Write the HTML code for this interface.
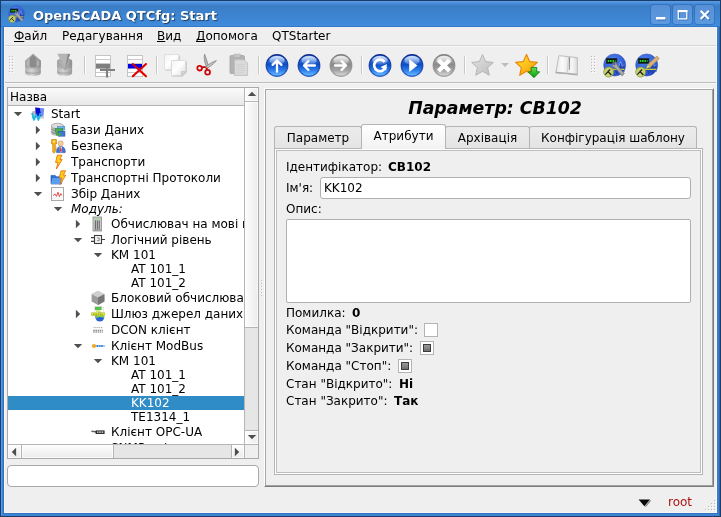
<!DOCTYPE html>
<html lang="uk">
<head>
<meta charset="utf-8">
<title>OpenSCADA QTCfg: Start</title>
<style>
html,body{margin:0;padding:0;}
body{width:721px;height:517px;overflow:hidden;background:#000;font-family:"DejaVu Sans","Liberation Sans",sans-serif;font-size:12px;color:#000;}
#win{will-change:transform;position:absolute;left:0;top:0;width:721px;height:517px;background:#1b3d6b;overflow:hidden;}
.ring{border:1px solid;}
#win *{box-sizing:border-box;}
.abs{position:absolute;}
#titlebar{left:1px;top:0;width:719px;height:27px;background:linear-gradient(#1b3d6b 0px,#1b3d6b 1px,#5b9ce4 1px,#5596e0 2px,#4487d3 4px,#3a7dc6 6px,#408bdc 26px,#3277c8 26px,#3277c8 27px);}
#title{left:32px;top:8px;font-weight:bold;font-size:13px;color:#fff;white-space:nowrap;text-shadow:1px 1px 1px rgba(0,0,0,.55);line-height:16px;}
.wbtn{top:5px;width:19px;height:19px;border-radius:3px;background:linear-gradient(#5790d6,#5c9ae0);box-shadow:0 0 0 1px rgba(40,95,170,.45);}
#client{left:4px;top:27px;width:713px;height:486px;background:#efefef;border:1px solid #f9f6f0;border-top:none;}
#menuline{left:5px;top:45px;width:711px;height:2px;background:linear-gradient(#d6d6d6 0,#d6d6d6 1px,#f9f9f9 1px,#f9f9f9 2px);}
.mi{top:29px;line-height:15px;white-space:nowrap;}
.mi u{text-decoration:underline;text-underline-offset:1px;text-decoration-skip-ink:none;}
#tbline{left:5px;top:82px;width:711px;height:2px;background:linear-gradient(#bcbcbc 0,#bcbcbc 1px,#f7f7f7 1px,#f7f7f7 2px);}
.sep{top:56px;width:1px;height:18px;background:#c4c4c4;}
/* tree */
#tree{left:7px;top:87px;width:252px;height:372px;border:1px solid #a9a9a9;background:#fff;}
#thead{left:0;top:0;width:236px;height:18px;background:linear-gradient(#fbfbfb,#e8e8e8);border-bottom:1px solid #b5b5b5;padding-left:2px;line-height:19px;}
#rows{left:0;top:0;width:236px;height:356px;overflow:hidden;}
.row{left:0;width:236px;white-space:nowrap;overflow:hidden;}
.row span{position:absolute;top:0;}
.sel{background:#308cc6;color:#fff;}
#vsb{left:236px;top:0;width:14px;height:356px;border-left:1px solid #b5b5b5;background:#e6e6e6;}
#hsb{left:0;top:356px;width:236px;height:14px;border-top:1px solid #b5b5b5;background:#e6e6e6;}
.vb{left:0;width:13px;background:linear-gradient(90deg,#fefefe,#ebebeb);box-shadow:inset 0 0 0 1px rgba(255,255,255,.7);}
.hb{top:0;height:13px;background:linear-gradient(#fefefe,#ebebeb);box-shadow:inset 0 0 0 1px rgba(255,255,255,.7);}
#corner{left:236px;top:356px;width:14px;height:14px;background:#efefef;border-left:1px solid #b5b5b5;border-top:1px solid #b5b5b5;}
#ledit{left:7px;top:465px;width:252px;height:22px;border:1px solid #a9a9a9;border-radius:4px;background:#fff;}
/* right */
#rframe{left:264px;top:88px;width:450px;height:399px;border:1px solid;border-color:#fff #7c7c7c #7c7c7c #fff;}
#rframe2{left:265px;top:89px;width:448px;height:397px;border:1px solid;border-color:#a8a8a8 #a2a2a2 #a2a2a2 #a8a8a8;}
#ptitle{left:272px;top:97px;width:446px;text-align:center;font-weight:bold;font-style:italic;font-size:17.33px;line-height:22px;white-space:nowrap;}
.tab{top:126px;height:22px;border:1px solid #b4b4b4;border-bottom:none;border-radius:3px 3px 0 0;background:linear-gradient(#ececec,#e4e4e4);text-align:center;line-height:22px;white-space:nowrap;}
.tab.on{top:124px;height:25px;background:linear-gradient(#ffffff,#f2f2f2);line-height:23px;z-index:3;}
#pane{left:274px;top:148px;width:429px;height:327px;border:1px solid #b4b4b4;}
#pane2{left:275px;top:149px;width:427px;height:325px;border:1px solid #fff;}
#inner{left:276px;top:150px;width:425px;height:323px;border:1px solid #bdbdbd;}
.lbl{white-space:nowrap;line-height:15px;}
.b{font-weight:bold;}
.inp{border:1px solid #b0b0b0;border-radius:3px;background:#fff;}
.cb{width:14px;height:14px;border:1px solid #b4b4b4;background:#fff;}
.cb i{position:absolute;left:2px;top:2px;width:8px;height:8px;background:linear-gradient(#9a9a9a,#6e6e6e);border:1px solid #3c3c3c;}
</style>
</head>
<body>
<div id="win">
 <div class="abs ring" style="left:1px;top:1px;width:719px;height:515px;border-color:#5b9ce4 #2c66b0 #3d80cc #5a9ae2"></div>
 <div class="abs ring" style="left:2px;top:2px;width:717px;height:513px;border-color:#5596e0 #3a7dc8 #3f88d8 #3f86d6"></div>
 <div class="abs ring" style="left:3px;top:3px;width:715px;height:511px;border-color:#4487d3 #3a7dc8 #2f74c4 #2f74c4"></div>
 <div id="titlebar" class="abs">
  <svg class="abs" style="left:5.65px;top:5.27px" width="19.64" height="18.9" viewBox="0 0 27 26"><defs><radialGradient id="oga" cx=".4" cy=".3" r=".8"><stop offset="0" stop-color="#4f83f2"/><stop offset="1" stop-color="#1f48c6"/></radialGradient></defs>
<circle cx="13" cy="12" r="11" fill="url(#oga)" stroke="#3a5bb8" stroke-width=".6"/>
<path d="M12 15 L15 10.6 L16.6 14.6 L19 8.6 L20.6 13.4 L22.4 11.6 L23 19 L20.8 17.6 L19 21.6 L17 18.4 L15 21.4 Z" fill="#1d3ca6" opacity=".75"/><path d="M15 10.6 L16.6 14.6 L19 8.6 L20.6 13.4 L22.4 11.6" fill="none" stroke="#a9c0f6" stroke-width=".7" opacity=".8"/>
<rect x="4.6" y="5.4" width="10.6" height="5" fill="#0c1a0c" stroke="#222" stroke-width=".5"/><path d="M6 7.9 H13.8" stroke="#25d325" stroke-width="2" stroke-dasharray="1.6 .8"/>
<path d="M9 16.3 H22.6" stroke="#e9e420" stroke-width="1.1"/>
<circle cx="7" cy="19" r="5" fill="#cdd66a" fill-opacity=".92" stroke="#7d8a2c" stroke-width=".7"/><path d="M3.6 21.6 L8.4 16.4 M6.4 18.6 L9.6 22" stroke="#111" stroke-width="1.1"/>
<path d="M11.2 9.6 L14.6 9 L15.4 12 L22.6 20.6 L20.4 22.8 L13 14.8 L10.4 13.4 Z" fill="#a9a9a9" stroke="#636363" stroke-width=".7"/><circle cx="12.6" cy="11" r="1.2" fill="#3a5fc9"/></svg>
  <div id="title" class="abs">OpenSCADA QTCfg: Start</div>
  <div class="abs wbtn" style="left:650px"><svg class="abs" style="left:0;top:0" width="19" height="19" viewBox="0 0 19 19"><rect x="6" y="13" width="9" height="2.5" fill="#1f4f94" opacity=".6"/><rect x="5" y="12" width="9.4" height="2.5" fill="#fff"/></svg></div>
  <div class="abs wbtn" style="left:672px"><svg class="abs" style="left:0;top:0" width="19" height="19" viewBox="0 0 19 19"><path d="M6.3 7 H14.8 V14.9 H6.3 Z" fill="none" stroke="#1f4f94" stroke-opacity=".55" stroke-width="1"/><path d="M5.3 6 H13.8 V13.9 H5.3 Z" fill="none" stroke="#fff" stroke-width="1.2"/><rect x="4.7" y="5" width="9.7" height="2.2" fill="#fff"/></svg></div>
  <div class="abs wbtn" style="left:694px"><svg class="abs" style="left:0;top:0" width="19" height="19" viewBox="0 0 19 19"><path d="M6.6 6.8 L14.8 15 M14.8 6.8 L6.6 15" stroke="#1f4f94" stroke-opacity=".55" stroke-width="2"/><path d="M5.6 5.8 L13.8 14 M13.8 5.8 L5.6 14" stroke="#fff" stroke-width="2.1"/></svg></div>
 </div>
 <div id="client" class="abs"></div>
 <!-- menu bar -->
 <div class="abs mi" style="left:14px"><u>Ф</u>айл</div>
 <div class="abs mi" style="left:62px">Редагування</div>
 <div class="abs mi" style="left:157px"><u>В</u>ид</div>
 <div class="abs mi" style="left:196px"><u>Д</u>опомога</div>
 <div class="abs mi" style="left:272px">QTStarter</div>
 <div id="menuline" class="abs"></div>
 <!-- toolbar -->
 <svg class="abs" style="left:9px;top:56px" width="5" height="17" viewBox="0 0 5 17"><rect x="0" y="0" width="1" height="1" fill="#b9b9b9"/><rect x="1" y="1" width="1" height="1" fill="#fff"/><rect x="3" y="0" width="1" height="1" fill="#b9b9b9"/><rect x="4" y="1" width="1" height="1" fill="#fff"/><rect x="0" y="3" width="1" height="1" fill="#b9b9b9"/><rect x="1" y="4" width="1" height="1" fill="#fff"/><rect x="3" y="3" width="1" height="1" fill="#b9b9b9"/><rect x="4" y="4" width="1" height="1" fill="#fff"/><rect x="0" y="6" width="1" height="1" fill="#b9b9b9"/><rect x="1" y="7" width="1" height="1" fill="#fff"/><rect x="3" y="6" width="1" height="1" fill="#b9b9b9"/><rect x="4" y="7" width="1" height="1" fill="#fff"/><rect x="0" y="9" width="1" height="1" fill="#b9b9b9"/><rect x="1" y="10" width="1" height="1" fill="#fff"/><rect x="3" y="9" width="1" height="1" fill="#b9b9b9"/><rect x="4" y="10" width="1" height="1" fill="#fff"/><rect x="0" y="12" width="1" height="1" fill="#b9b9b9"/><rect x="1" y="13" width="1" height="1" fill="#fff"/><rect x="3" y="12" width="1" height="1" fill="#b9b9b9"/><rect x="4" y="13" width="1" height="1" fill="#fff"/><rect x="0" y="15" width="1" height="1" fill="#b9b9b9"/><rect x="1" y="16" width="1" height="1" fill="#fff"/><rect x="3" y="15" width="1" height="1" fill="#b9b9b9"/><rect x="4" y="16" width="1" height="1" fill="#fff"/></svg>
 <svg class="abs" style="left:591px;top:56px" width="5" height="17" viewBox="0 0 5 17"><rect x="0" y="0" width="1" height="1" fill="#b9b9b9"/><rect x="1" y="1" width="1" height="1" fill="#fff"/><rect x="3" y="0" width="1" height="1" fill="#b9b9b9"/><rect x="4" y="1" width="1" height="1" fill="#fff"/><rect x="0" y="3" width="1" height="1" fill="#b9b9b9"/><rect x="1" y="4" width="1" height="1" fill="#fff"/><rect x="3" y="3" width="1" height="1" fill="#b9b9b9"/><rect x="4" y="4" width="1" height="1" fill="#fff"/><rect x="0" y="6" width="1" height="1" fill="#b9b9b9"/><rect x="1" y="7" width="1" height="1" fill="#fff"/><rect x="3" y="6" width="1" height="1" fill="#b9b9b9"/><rect x="4" y="7" width="1" height="1" fill="#fff"/><rect x="0" y="9" width="1" height="1" fill="#b9b9b9"/><rect x="1" y="10" width="1" height="1" fill="#fff"/><rect x="3" y="9" width="1" height="1" fill="#b9b9b9"/><rect x="4" y="10" width="1" height="1" fill="#fff"/><rect x="0" y="12" width="1" height="1" fill="#b9b9b9"/><rect x="1" y="13" width="1" height="1" fill="#fff"/><rect x="3" y="12" width="1" height="1" fill="#b9b9b9"/><rect x="4" y="13" width="1" height="1" fill="#fff"/><rect x="0" y="15" width="1" height="1" fill="#b9b9b9"/><rect x="1" y="16" width="1" height="1" fill="#fff"/><rect x="3" y="15" width="1" height="1" fill="#b9b9b9"/><rect x="4" y="16" width="1" height="1" fill="#fff"/></svg>
 <svg class="abs" style="left:84px;top:56px" width="2" height="18" viewBox="0 0 2 18"><rect x="0" y="0" width="1" height="18" fill="#c9c9c9"/><rect x="1" y="0" width="1" height="18" fill="#fcfcfc"/></svg>
 <svg class="abs" style="left:156px;top:56px" width="2" height="18" viewBox="0 0 2 18"><rect x="0" y="0" width="1" height="18" fill="#c9c9c9"/><rect x="1" y="0" width="1" height="18" fill="#fcfcfc"/></svg>
 <svg class="abs" style="left:258px;top:56px" width="2" height="18" viewBox="0 0 2 18"><rect x="0" y="0" width="1" height="18" fill="#c9c9c9"/><rect x="1" y="0" width="1" height="18" fill="#fcfcfc"/></svg>
 <svg class="abs" style="left:361px;top:56px" width="2" height="18" viewBox="0 0 2 18"><rect x="0" y="0" width="1" height="18" fill="#c9c9c9"/><rect x="1" y="0" width="1" height="18" fill="#fcfcfc"/></svg>
 <svg class="abs" style="left:464px;top:56px" width="2" height="18" viewBox="0 0 2 18"><rect x="0" y="0" width="1" height="18" fill="#c9c9c9"/><rect x="1" y="0" width="1" height="18" fill="#fcfcfc"/></svg>
 <svg class="abs" style="left:547px;top:56px" width="2" height="18" viewBox="0 0 2 18"><rect x="0" y="0" width="1" height="18" fill="#c9c9c9"/><rect x="1" y="0" width="1" height="18" fill="#fcfcfc"/></svg>
 <svg class="abs" style="left:25px;top:53px" width="17" height="24" viewBox="0 0 17 24"><defs><linearGradient id="dla" x1="0" x2="1" y1="0" y2="0"><stop offset="0" stop-color="#b2b2b2"/><stop offset=".4" stop-color="#d2d2d2"/><stop offset="1" stop-color="#9d9d9d"/></linearGradient>
<linearGradient id="dlb" x1="0" x2="1" y1="0" y2="0"><stop offset="0" stop-color="#a2a2a2"/><stop offset=".45" stop-color="#bcbcbc"/><stop offset="1" stop-color="#8f8f8f"/></linearGradient></defs><path d="M8 .6 L15.8 7.8 V20.2 C15.8 23.6 .2 23.6 .2 20.2 V7.8 Z" fill="url(#dla)"/>
<path d="M8 .6 L15.8 7.8 V13.6 C15.8 16.6 .2 16.6 .2 13.6 V7.8 Z" fill="url(#dlb)"/>
<path d="M.2 17.2 C.2 20.4 15.8 20.4 15.8 17.2 V18.4 C15.8 21.6 .2 21.6 .2 18.4 Z" fill="#9e9e9e" opacity=".75"/>
<path d="M8 1.6 L11.3 5 V13.2 C11.3 15 4.7 15 4.7 13.2 V5 Z" fill="#8b8b8b"/>
<path d="M3 8 V12.6 M13 8 V12.6" stroke="#c2c2c2" stroke-width="1.4" opacity=".7"/></svg>
 <svg class="abs" style="left:57px;top:53px" width="17" height="24" viewBox="0 0 17 24"><defs><linearGradient id="dsa" x1="0" x2="1" y1="0" y2="0"><stop offset="0" stop-color="#b2b2b2"/><stop offset=".4" stop-color="#d2d2d2"/><stop offset="1" stop-color="#9d9d9d"/></linearGradient>
<linearGradient id="dsb" x1="0" x2="1" y1="0" y2="0"><stop offset="0" stop-color="#a2a2a2"/><stop offset=".45" stop-color="#bcbcbc"/><stop offset="1" stop-color="#8f8f8f"/></linearGradient></defs><path d="M.1 8 V20.2 C.1 23.6 15.1 23.6 15.1 20.2 V8 C15.1 4.6 .1 4.6 .1 8 Z" fill="url(#dsa)"/>
<path d="M.1 8 V13.4 C.1 16.6 15.1 16.6 15.1 13.4 V8 C15.1 4.6 .1 4.6 .1 8 Z" fill="url(#dsb)"/>
<path d="M.1 17.2 C.1 20.4 15.1 20.4 15.1 17.2 V18.4 C15.1 21.6 .1 21.6 .1 18.4 Z" fill="#9e9e9e" opacity=".75"/>
<path d="M.9 1 H13 L8 15.8 Z" fill="#b6b6b6" stroke="#a0a0a0" stroke-width=".4"/><path d="M10.8 1 H13 L8 15.8 Z" fill="#868686"/>
<path d="M2.4 10.5 L8 17 L13.4 9.4" fill="none" stroke="#8f8f8f" stroke-width="1" opacity=".6"/></svg>
 <svg class="abs" style="left:95px;top:55px" width="22" height="23" viewBox="0 0 22 23"><rect x=".5" y=".5" width="15" height="21" fill="#fff" stroke="#c4c4c4"/>
<path d="M1 4.5 H15 M1 8.5 H15 M1 13.5 H15 M1 17.5 H15" stroke="#c9c9c9" stroke-width="1"/><rect x="1" y="9" width="14" height="4.4" fill="#7f7f7f"/><path d="M5 15 H20 M12 9.5 V22.5" stroke="#808080" stroke-width="2.2"/></svg>
 <svg class="abs" style="left:127px;top:55px" width="22" height="23" viewBox="0 0 22 23"><rect x=".5" y=".5" width="15" height="21" fill="#fff" stroke="#c4c4c4"/>
<path d="M1 4.5 H15 M1 8.5 H15 M1 13.5 H15 M1 17.5 H15" stroke="#c9c9c9" stroke-width="1"/><rect x="1" y="9" width="14" height="4.4" fill="#0000e6"/><path d="M5.8 9 L19 21.2 M19 9 L5.8 21.2" stroke="#e40000" stroke-width="2.1" stroke-linecap="round"/></svg>
 <svg class="abs" style="left:163px;top:53px" width="24" height="24" viewBox="0 0 24 24"><defs><linearGradient id="cpg" x1="0" x2="1" y1="0" y2="1"><stop offset="0" stop-color="#f2f2f2"/><stop offset=".45" stop-color="#ffffff"/><stop offset="1" stop-color="#dedede"/></linearGradient></defs>
<path d="M2.4 17 H12 L16.4 12.8 V2.4" fill="none" stroke="#c9c9c9" stroke-width="1.6" opacity=".8"/>
<path d="M1.5 1.5 H15.5 V12.5 L11.5 16.5 H1.5 Z" fill="url(#cpg)" stroke="#dcdcdc" stroke-width=".8"/>
<path d="M15.5 12.5 H11.5 V16.5 Z" fill="#d9d9d9" stroke="#c6c6c6" stroke-width=".7"/>
<path d="M9.4 23 H19 L23.4 18.8 V8.4" fill="none" stroke="#c4c4c4" stroke-width="1.6" opacity=".8"/>
<path d="M8.5 7.5 H22.5 V18.5 L18.5 22.5 H8.5 Z" fill="url(#cpg)" stroke="#d6d6d6" stroke-width=".8"/>
<path d="M22.5 18.5 H18.5 V22.5 Z" fill="#d6d6d6" stroke="#c2c2c2" stroke-width=".7"/></svg>
 <svg class="abs" style="left:195px;top:53px" width="24" height="24" viewBox="0 0 24 24"><path d="M9.6 1.2 C8.6 5 9.6 10.5 12.2 15 L13.6 13.6 C12.2 9.5 11.4 5 9.6 1.2 Z" fill="#b8b8b8" stroke="#7c7c7c" stroke-width=".7"/>
<path d="M21.4 7.6 C18 8.6 13.4 11.2 10 14.6 L11.6 16 C15 13.2 19 11 21.4 7.6 Z" fill="#c4c4c4" stroke="#7c7c7c" stroke-width=".7"/>
<circle cx="4.6" cy="15.2" r="2.3" fill="none" stroke="#cc0a0a" stroke-width="1.8"/>
<circle cx="12.6" cy="19.2" r="2.4" fill="none" stroke="#cc0a0a" stroke-width="1.8"/>
<path d="M6.6 14.4 L10.6 13.8 M12 16.8 L11.6 14.6" stroke="#cc0a0a" stroke-width="1.8"/></svg>
 <svg class="abs" style="left:228px;top:53px" width="22" height="24" viewBox="0 0 22 24"><rect x="2" y="2.6" width="14.4" height="18" rx="1.2" fill="#b3b3b3" stroke="#a2a2a2" stroke-width=".8"/>
<rect x="5.6" y="1.2" width="7.2" height="3.4" rx="1" fill="#c6c6c6" stroke="#a4a4a4" stroke-width=".6"/>
<path d="M6.5 6.8 H16 L19.6 10 V22.4 H6.5 Z" fill="#dadada" stroke="#bdbdbd" stroke-width=".8"/>
<path d="M8.5 11.5 H17 M8.5 13.5 H17 M8.5 15.5 H17 M8.5 17.5 H17 M8.5 19.5 H15" stroke="#cdcdcd" stroke-width=".7"/></svg>
 <svg class="abs" style="left:265px;top:53px" width="24" height="24" viewBox="0 -0.5 24 24"><defs><linearGradient id="buf" x1="0" x2="0" y1="0" y2="1"><stop offset="0" stop-color="#4f93f0"/><stop offset=".45" stop-color="#0c4cc4"/><stop offset=".75" stop-color="#2f82ec"/><stop offset="1" stop-color="#6abaff"/></linearGradient>
<linearGradient id="bub" x1="0" x2="0" y1="0" y2="1"><stop offset="0" stop-color="#0d2688"/><stop offset="1" stop-color="#2f66cc"/></linearGradient>
<linearGradient id="bug" x1="0" x2="0" y1="0" y2="1"><stop offset="0" stop-color="#fff" stop-opacity=".78"/><stop offset="1" stop-color="#fff" stop-opacity=".1"/></linearGradient></defs>
<circle cx="12" cy="12" r="11.4" fill="url(#bub)"/><circle cx="12" cy="12" r="10.1" fill="url(#buf)"/>
<ellipse cx="12" cy="7" rx="7.6" ry="4.6" fill="url(#bug)"/><path d="M12 18.2 V7.4 M7.6 11.4 L12 7 L16.4 11.4" fill="none" stroke="#fff" stroke-width="2.3" stroke-linecap="round" stroke-linejoin="round"/></svg>
 <svg class="abs" style="left:297px;top:53px" width="24" height="24" viewBox="0 -0.5 24 24"><defs><linearGradient id="blf" x1="0" x2="0" y1="0" y2="1"><stop offset="0" stop-color="#4f93f0"/><stop offset=".45" stop-color="#0c4cc4"/><stop offset=".75" stop-color="#2f82ec"/><stop offset="1" stop-color="#6abaff"/></linearGradient>
<linearGradient id="blb" x1="0" x2="0" y1="0" y2="1"><stop offset="0" stop-color="#0d2688"/><stop offset="1" stop-color="#2f66cc"/></linearGradient>
<linearGradient id="blg" x1="0" x2="0" y1="0" y2="1"><stop offset="0" stop-color="#fff" stop-opacity=".78"/><stop offset="1" stop-color="#fff" stop-opacity=".1"/></linearGradient></defs>
<circle cx="12" cy="12" r="11.4" fill="url(#blb)"/><circle cx="12" cy="12" r="10.1" fill="url(#blf)"/>
<ellipse cx="12" cy="7" rx="7.6" ry="4.6" fill="url(#blg)"/><path d="M18 12 H7.4 M11.4 7.6 L7 12 L11.4 16.4" fill="none" stroke="#fff" stroke-width="2.3" stroke-linecap="round" stroke-linejoin="round"/></svg>
 <svg class="abs" style="left:329px;top:53px" width="24" height="24" viewBox="0 -0.5 24 24"><defs><linearGradient id="brf" x1="0" x2="0" y1="0" y2="1"><stop offset="0" stop-color="#c6c6c6"/><stop offset=".45" stop-color="#8a8a8a"/><stop offset=".75" stop-color="#a6a6a6"/><stop offset="1" stop-color="#d8d8d8"/></linearGradient>
<linearGradient id="brb" x1="0" x2="0" y1="0" y2="1"><stop offset="0" stop-color="#7e7e7e"/><stop offset="1" stop-color="#a4a4a4"/></linearGradient>
<linearGradient id="brg" x1="0" x2="0" y1="0" y2="1"><stop offset="0" stop-color="#fff" stop-opacity=".78"/><stop offset="1" stop-color="#fff" stop-opacity=".1"/></linearGradient></defs>
<circle cx="12" cy="12" r="11.4" fill="url(#brb)"/><circle cx="12" cy="12" r="10.1" fill="url(#brf)"/>
<ellipse cx="12" cy="7" rx="7.6" ry="4.6" fill="url(#brg)"/><path d="M6 12 H16.6 M12.6 7.6 L17 12 L12.6 16.4" fill="none" stroke="#fff" stroke-width="2.3" stroke-linecap="round" stroke-linejoin="round"/></svg>
 <svg class="abs" style="left:368px;top:53px" width="24" height="24" viewBox="0 -0.5 24 24"><defs><linearGradient id="bref" x1="0" x2="0" y1="0" y2="1"><stop offset="0" stop-color="#4f93f0"/><stop offset=".45" stop-color="#0c4cc4"/><stop offset=".75" stop-color="#2f82ec"/><stop offset="1" stop-color="#6abaff"/></linearGradient>
<linearGradient id="breb" x1="0" x2="0" y1="0" y2="1"><stop offset="0" stop-color="#0d2688"/><stop offset="1" stop-color="#2f66cc"/></linearGradient>
<linearGradient id="breg" x1="0" x2="0" y1="0" y2="1"><stop offset="0" stop-color="#fff" stop-opacity=".78"/><stop offset="1" stop-color="#fff" stop-opacity=".1"/></linearGradient></defs>
<circle cx="12" cy="12" r="11.4" fill="url(#breb)"/><circle cx="12" cy="12" r="10.1" fill="url(#bref)"/>
<ellipse cx="12" cy="7" rx="7.6" ry="4.6" fill="url(#breg)"/><path d="M16.6 8.4 A5.8 5.8 0 1 0 17.6 13.4" fill="none" stroke="#fff" stroke-width="2.7"/><path d="M18.9 10.6 L18.2 17 L12.6 13.6 Z" fill="#fff"/></svg>
 <svg class="abs" style="left:400px;top:53px" width="24" height="24" viewBox="0 -0.5 24 24"><defs><linearGradient id="bpf" x1="0" x2="0" y1="0" y2="1"><stop offset="0" stop-color="#4f93f0"/><stop offset=".45" stop-color="#0c4cc4"/><stop offset=".75" stop-color="#2f82ec"/><stop offset="1" stop-color="#6abaff"/></linearGradient>
<linearGradient id="bpb" x1="0" x2="0" y1="0" y2="1"><stop offset="0" stop-color="#0d2688"/><stop offset="1" stop-color="#2f66cc"/></linearGradient>
<linearGradient id="bpg" x1="0" x2="0" y1="0" y2="1"><stop offset="0" stop-color="#fff" stop-opacity=".78"/><stop offset="1" stop-color="#fff" stop-opacity=".1"/></linearGradient></defs>
<circle cx="12" cy="12" r="11.4" fill="url(#bpb)"/><circle cx="12" cy="12" r="10.1" fill="url(#bpf)"/>
<ellipse cx="12" cy="7" rx="7.6" ry="4.6" fill="url(#bpg)"/><path d="M9.2 5.6 L17.4 12 L9.2 18.4 Z" fill="#fff"/></svg>
 <svg class="abs" style="left:432px;top:53px" width="24" height="24" viewBox="0 -0.5 24 24"><defs><linearGradient id="bsf" x1="0" x2="0" y1="0" y2="1"><stop offset="0" stop-color="#c6c6c6"/><stop offset=".45" stop-color="#8a8a8a"/><stop offset=".75" stop-color="#a6a6a6"/><stop offset="1" stop-color="#d8d8d8"/></linearGradient>
<linearGradient id="bsb" x1="0" x2="0" y1="0" y2="1"><stop offset="0" stop-color="#7e7e7e"/><stop offset="1" stop-color="#a4a4a4"/></linearGradient>
<linearGradient id="bsg" x1="0" x2="0" y1="0" y2="1"><stop offset="0" stop-color="#fff" stop-opacity=".78"/><stop offset="1" stop-color="#fff" stop-opacity=".1"/></linearGradient></defs>
<circle cx="12" cy="12" r="11.4" fill="url(#bsb)"/><circle cx="12" cy="12" r="10.1" fill="url(#bsf)"/>
<ellipse cx="12" cy="7" rx="7.6" ry="4.6" fill="url(#bsg)"/><path d="M6.5 6.5 L17.5 17.5 M17.5 6.5 L6.5 17.5" stroke="#fff" stroke-width="4.4" stroke-linecap="butt"/></svg>
 <svg class="abs" style="left:471px;top:53px" width="23" height="23" viewBox="0 -0.6 22 22"><defs><linearGradient id="sg1" x1="0" x2="1" y1="0" y2="1"><stop offset="0" stop-color="#e4e4e4"/><stop offset="1" stop-color="#bcbcbc"/></linearGradient></defs>
<path d="M11 0.8 L14 7.6 L21.4 8.4 L15.9 13.4 L17.5 20.7 L11 16.9 L4.5 20.7 L6.1 13.4 L0.6 8.4 L8 7.6 Z" fill="url(#sg1)" stroke="#b2b2b2" stroke-width=".9" stroke-linejoin="round"/></svg>
 <svg class="abs" style="left:501px;top:63px" width="8" height="4" viewBox="0 0 8 4"><path d="M0 0 H8 L4 4 Z" fill="#bdbdbd"/></svg>
 <svg class="abs" style="left:515px;top:53px" width="26" height="25" viewBox="0 -0.6 24.87 23.9"><defs><linearGradient id="sg2" x1="0" x2=".7" y1="0" y2="1"><stop offset="0" stop-color="#ffe93a"/><stop offset=".55" stop-color="#ffc21c"/><stop offset="1" stop-color="#f39a0c"/></linearGradient>
<linearGradient id="sg3" x1="0" x2="0" y1="0" y2="1"><stop offset="0" stop-color="#5fe04a"/><stop offset="1" stop-color="#0c9a10"/></linearGradient></defs>
<path d="M11 0.8 L14 7.6 L21.4 8.4 L15.9 13.4 L17.5 20.7 L11 16.9 L4.5 20.7 L6.1 13.4 L0.6 8.4 L8 7.6 Z" fill="url(#sg2)" stroke="#e8860a" stroke-width="1.1" stroke-linejoin="round"/>
<path d="M15.4 13.2 H20.8 V17.4 H23.6 L18.1 23 L12.6 17.4 H15.4 Z" fill="url(#sg3)" stroke="#0b7d12" stroke-width=".8" stroke-linejoin="round"/></svg>
 <svg class="abs" style="left:555px;top:55px" width="25" height="22" viewBox="0 0 25 22"><defs><linearGradient id="bkg" x1="0" x2="1" y1="0" y2="0"><stop offset="0" stop-color="#e6e6e6"/><stop offset=".3" stop-color="#fbfbfb"/><stop offset=".55" stop-color="#e9e9e9"/><stop offset=".75" stop-color="#f6f6f6"/><stop offset="1" stop-color="#dadada"/></linearGradient></defs>
<path d="M3.9 .7 L13.8 1.6 L22.4 2.7 V19.6 L12 18.6 L.8 17.6 Z" fill="url(#bkg)" stroke="#bdbdbd" stroke-width="1"/>
<path d="M.6 17.5 L12 18.6 L22.5 19.7" fill="none" stroke="#ababab" stroke-width="1.5"/>
<path d="M13.7 1.6 L12 18.6" stroke="#cfcfcf" stroke-width="1"/><path d="M14.5 2.2 L14.3 14.8" stroke="#8c8c8c" stroke-width="1"/></svg>
 <svg class="abs" style="left:601px;top:53px" width="27" height="26" viewBox="-0.7 0 27 26"><defs><radialGradient id="og1" cx=".4" cy=".3" r=".8"><stop offset="0" stop-color="#4f83f2"/><stop offset="1" stop-color="#1f48c6"/></radialGradient></defs>
<circle cx="13" cy="12" r="11" fill="url(#og1)" stroke="#3a5bb8" stroke-width=".6"/>
<path d="M12 15 L15 10.6 L16.6 14.6 L19 8.6 L20.6 13.4 L22.4 11.6 L23 19 L20.8 17.6 L19 21.6 L17 18.4 L15 21.4 Z" fill="#1d3ca6" opacity=".75"/><path d="M15 10.6 L16.6 14.6 L19 8.6 L20.6 13.4 L22.4 11.6" fill="none" stroke="#a9c0f6" stroke-width=".7" opacity=".8"/>
<rect x="4.6" y="5.4" width="10.6" height="5" fill="#0c1a0c" stroke="#222" stroke-width=".5"/><path d="M6 7.9 H13.8" stroke="#25d325" stroke-width="2" stroke-dasharray="1.6 .8"/>
<path d="M9 16.3 H22.6" stroke="#e9e420" stroke-width="1.1"/>
<circle cx="7" cy="19" r="5" fill="#cdd66a" fill-opacity=".92" stroke="#7d8a2c" stroke-width=".7"/><path d="M3.6 21.6 L8.4 16.4 M6.4 18.6 L9.6 22" stroke="#111" stroke-width="1.1"/>
<path d="M11.2 9.6 L14.6 9 L15.4 12 L22.6 20.6 L20.4 22.8 L13 14.8 L10.4 13.4 Z" fill="#a9a9a9" stroke="#636363" stroke-width=".7"/><circle cx="12.6" cy="11" r="1.2" fill="#3a5fc9"/></svg>
 <svg class="abs" style="left:633px;top:53px" width="27" height="26" viewBox="-0.7 0 27 26"><defs><radialGradient id="og2" cx=".4" cy=".3" r=".8"><stop offset="0" stop-color="#4f83f2"/><stop offset="1" stop-color="#1f48c6"/></radialGradient></defs>
<circle cx="13" cy="12" r="11" fill="url(#og2)" stroke="#3a5bb8" stroke-width=".6"/>
<path d="M12 15 L15 10.6 L16.6 14.6 L19 8.6 L20.6 13.4 L22.4 11.6 L23 19 L20.8 17.6 L19 21.6 L17 18.4 L15 21.4 Z" fill="#1d3ca6" opacity=".75"/><path d="M15 10.6 L16.6 14.6 L19 8.6 L20.6 13.4 L22.4 11.6" fill="none" stroke="#a9c0f6" stroke-width=".7" opacity=".8"/>
<rect x="4.6" y="5.4" width="10.6" height="5" fill="#0c1a0c" stroke="#222" stroke-width=".5"/><path d="M6 7.9 H13.8" stroke="#25d325" stroke-width="2" stroke-dasharray="1.6 .8"/>
<path d="M9 16.3 H22.6" stroke="#e9e420" stroke-width="1.1"/>
<circle cx="7" cy="19" r="5" fill="#cdd66a" fill-opacity=".92" stroke="#7d8a2c" stroke-width=".7"/><path d="M3.6 21.6 L8.4 16.4 M6.4 18.6 L9.6 22" stroke="#111" stroke-width="1.1"/>
<path d="M23.2 3 L25.6 5.6 L16.6 14 L14.2 11.4 Z" fill="#d7b07a" stroke="#a98752" stroke-width=".6"/><path d="M14.2 11.4 L16.6 14 L12.4 15.6 Z" fill="#efe36a" stroke="#b9a93a" stroke-width=".5"/></svg>
 <div id="tbline" class="abs"></div>
 <!-- tree -->
 <div id="tree" class="abs">
  <div id="rows" class="abs">
    <div class="row abs" style="top:18px;height:16px;line-height:16px"><svg class="abs" style="left:5px;top:5px" width="10" height="6" viewBox="0 0 10 6"><path d="M0.8 0.9 H9.2 L5 5.2 Z" fill="#505050"/></svg><svg class="abs" style="left:22px;top:0" width="16" height="16" viewBox="0 0 16 16"><path d="M2 5.5 L6 4.5 V12 L2 12.5 Z" fill="#b9b9b9"/><path d="M5.2 1.6 L14.2 2.4 L13.2 10.6 L6 10.2 Z" fill="#9fb4f2"/><path d="M5.2 1.6 L10 2 L11.6 10.5 L6 10.2 Z" fill="#0a0ad2"/><path d="M10 2 L14.2 2.4 L13.2 10.6 L11.6 10.5 Z" fill="#6f8cf0"/>
<path d="M8 11 L14 10.6 L13.6 12.4 L8.4 12.6 Z" fill="#c9c9c9"/>
<path d="M2 7 L4 14 L6.2 8.6 L8.4 14 L10.4 7" fill="none" stroke="#19b9e6" stroke-width="1.7" stroke-linejoin="round"/></svg><span style="left:43px">Start</span></div>
    <div class="row abs" style="top:34px;height:16px;line-height:16px"><svg class="abs" style="left:27px;top:3px" width="6" height="10" viewBox="0 0 6 10"><path d="M0.9 0.8 V9.2 L5.2 5 Z" fill="#505050"/></svg><svg class="abs" style="left:42px;top:0" width="16" height="16" viewBox="0 0 16 16"><path d="M1.2 4 V11.6 C1.2 14.6 13.6 14.6 13.6 11.6 V4 Z" fill="#b9b9b9"/><path d="M1.2 6.6 C1.2 9.4 13.6 9.4 13.6 6.6 M1.2 9.4 C1.2 12.2 13.6 12.2 13.6 9.4" fill="none" stroke="#808080" stroke-width=".9"/>
<ellipse cx="7.4" cy="4" rx="6.2" ry="2.7" fill="#dedede" stroke="#949494" stroke-width=".7"/>
<rect x="7.4" y="4.6" width="7.4" height="3.4" fill="#6fb6e8" stroke="#3c78b4" stroke-width=".5"/><rect x="5.6" y="6.6" width="7.2" height="4" fill="#45b152" stroke="#2b7d33" stroke-width=".5"/><rect x="8.4" y="9.4" width="6.6" height="4.8" fill="#3d78d8" stroke="#27509e" stroke-width=".5"/><rect x="6" y="11" width="5" height="2.6" fill="#3fa64a"/></svg><span style="left:63px">Бази Даних</span></div>
    <div class="row abs" style="top:50px;height:16px;line-height:16px"><svg class="abs" style="left:27px;top:3px" width="6" height="10" viewBox="0 0 6 10"><path d="M0.9 0.8 V9.2 L5.2 5 Z" fill="#505050"/></svg><svg class="abs" style="left:42px;top:0" width="16" height="16" viewBox="0 0 16 16"><circle cx="10.6" cy="5.4" r="2.6" fill="#f4cfa4" stroke="#c08a58" stroke-width=".5"/><path d="M6.6 14.6 C6.4 10.4 8 8.6 10.8 8.6 C13.8 8.6 15.4 10.4 15.2 14.6 Z" fill="#3f74dc" stroke="#2a4ea6" stroke-width=".6"/><path d="M9.6 8.8 H12 L11.6 14.2 H10 Z" fill="#f4f4f4"/><path d="M10.4 9.2 H11.2 L11.6 13 L10.8 14 L10 13 Z" fill="#d41414"/>
<path d="M1.6 1.6 H6.4 V6 H5.2 V14 L4 15.2 L2.8 14 V6 H1.6 Z" fill="#f9b916" stroke="#c47a06" stroke-width=".7" stroke-linejoin="round"/><rect x="3.2" y="2.8" width="1.6" height="1.4" fill="#fff3c0"/><path d="M5.2 9 H6.6 M5.2 11.4 H6.6" stroke="#d48a0a" stroke-width="1.1"/></svg><span style="left:63px">Безпека</span></div>
    <div class="row abs" style="top:66px;height:16px;line-height:16px"><svg class="abs" style="left:27px;top:3px" width="6" height="10" viewBox="0 0 6 10"><path d="M0.9 0.8 V9.2 L5.2 5 Z" fill="#505050"/></svg><svg class="abs" style="left:42px;top:0" width="16" height="16" viewBox="0 0 16 16"><path d="M7.4 1.2 l4.6 0 l-2.2 4.4 l2.4 0 l-5.8 9.4 l1.6 -6.6 l-2.4 0 z" fill="#ffd21e" stroke="#e8700a" stroke-width=".9" stroke-linejoin="round"/></svg><span style="left:63px">Транспорти</span></div>
    <div class="row abs" style="top:82px;height:16px;line-height:16px"><svg class="abs" style="left:27px;top:3px" width="6" height="10" viewBox="0 0 6 10"><path d="M0.9 0.8 V9.2 L5.2 5 Z" fill="#505050"/></svg><svg class="abs" style="left:42px;top:0" width="16" height="16" viewBox="0 0 16 16"><path d="M1 5.4 H5.2 L6.4 6.8 H11.6 V14 H1 Z" fill="#2c6fd6" stroke="#1c4ea4" stroke-width=".6"/><path d="M2.4 8 H13.2 L11.6 14 H1 Z" fill="#5b9df0"/>
<path d="M11 0.8 l4.6 0 l-2.2 4.4 l2.4 0 l-5.8 9.4 l1.6 -6.6 l-2.4 0 z" fill="#ffc81e" stroke="#e8700a" stroke-width=".8" stroke-linejoin="round"/></svg><span style="left:63px">Транспортні Протоколи</span></div>
    <div class="row abs" style="top:98px;height:16px;line-height:16px"><svg class="abs" style="left:25px;top:5px" width="10" height="6" viewBox="0 0 10 6"><path d="M0.8 0.9 H9.2 L5 5.2 Z" fill="#505050"/></svg><svg class="abs" style="left:42px;top:0" width="16" height="16" viewBox="0 0 16 16"><rect x="1.5" y="1.5" width="12" height="13" fill="#fbfbfb" stroke="#a9a9a9"/><path d="M3 9.6 L5 8 L6.4 10.4 L8 6.2 L9.4 10.6 L10.8 7.6 L12 9.4" fill="none" stroke="#e23a3a" stroke-width=".9"/></svg><span style="left:63px">Збір Даних</span></div>
    <div class="row abs" style="top:114px;height:14px;line-height:14px"><svg class="abs" style="left:45px;top:4px" width="10" height="6" viewBox="0 0 10 6"><path d="M0.8 0.9 H9.2 L5 5.2 Z" fill="#505050"/></svg><span style="left:63px;font-style:italic">Модуль:</span></div>
    <div class="row abs" style="top:128px;height:16px;line-height:16px"><svg class="abs" style="left:67px;top:3px" width="6" height="10" viewBox="0 0 6 10"><path d="M0.9 0.8 V9.2 L5.2 5 Z" fill="#505050"/></svg><svg class="abs" style="left:82px;top:0" width="16" height="16" viewBox="0 0 16 16"><rect x="3" y="1" width="8.6" height="14" fill="#c9c9c9" stroke="#8e8e8e" stroke-width=".8"/><rect x="4" y="2" width="6.6" height="1.6" fill="#a8d8a0"/><path d="M5.4 4.4 V13.4 M7.3 4.4 V13.4 M9.2 4.4 V13.4" stroke="#5e5e5e" stroke-width="1"/><path d="M4 14 H10.6" stroke="#7b7b7b" stroke-width=".8"/></svg><span style="left:103px">Обчислювач на мові подібній до Java</span></div>
    <div class="row abs" style="top:144px;height:16px;line-height:16px"><svg class="abs" style="left:65px;top:5px" width="10" height="6" viewBox="0 0 10 6"><path d="M0.8 0.9 H9.2 L5 5.2 Z" fill="#505050"/></svg><svg class="abs" style="left:82px;top:0" width="16" height="16" viewBox="0 0 16 16"><rect x="4.5" y="3.5" width="7" height="8" fill="#f4f4f4" stroke="#3d3d3d" stroke-width="1.1"/><path d="M1 5.6 H4.5 M1 9.4 H4.5 M11.5 7.5 H15" stroke="#3d3d3d" stroke-width="1.1"/><path d="M7 6 H9.2 V8.6 H7" fill="none" stroke="#6b6b6b" stroke-width=".8"/></svg><span style="left:103px">Логічний рівень</span></div>
    <div class="row abs" style="top:160px;height:14px;line-height:14px"><svg class="abs" style="left:85px;top:4px" width="10" height="6" viewBox="0 0 10 6"><path d="M0.8 0.9 H9.2 L5 5.2 Z" fill="#505050"/></svg><span style="left:103px">KM 101</span></div>
    <div class="row abs" style="top:174px;height:14px;line-height:14px"><span style="left:123px">AT 101_1</span></div>
    <div class="row abs" style="top:188px;height:14px;line-height:14px"><span style="left:123px">AT 101_2</span></div>
    <div class="row abs" style="top:202px;height:16px;line-height:16px"><svg class="abs" style="left:82px;top:0" width="16" height="16" viewBox="0 0 16 16"><path d="M8 1 L14.4 4.2 V11.6 L8 15 L1.6 11.6 V4.2 Z" fill="#9c9c9c"/><path d="M8 1 L14.4 4.2 L8 7.4 L1.6 4.2 Z" fill="#cfcfcf"/><path d="M8 7.4 L14.4 4.2 V11.6 L8 15 Z" fill="#767676"/></svg><span style="left:103px">Блоковий обчислювач</span></div>
    <div class="row abs" style="top:218px;height:16px;line-height:16px"><svg class="abs" style="left:67px;top:3px" width="6" height="10" viewBox="0 0 6 10"><path d="M0.9 0.8 V9.2 L5.2 5 Z" fill="#505050"/></svg><svg class="abs" style="left:82px;top:0" width="16" height="16" viewBox="0 0 16 16"><rect x="4.2" y="1" width="9" height="9" fill="none" stroke="#f3b6d6" stroke-width=".5"/><circle cx="9.8" cy="11" r="4.5" fill="#2c62d6"/><path d="M6 10.4 C8 8.2 11.6 8.2 14 9.8 L13.8 12 C11.6 10.6 8.4 10.8 6.4 12.4 Z" fill="#7fd24a"/><rect x="5.2" y="1" width="6" height="2.8" fill="#46d246" stroke="#2f9a2f" stroke-width=".4"/><rect x="6" y="4.2" width="4.6" height="2" fill="#cfe86a"/><rect x="1.4" y="6.8" width="13.4" height="2.8" fill="#e8e23a" stroke="#a8b82a" stroke-width=".5"/><path d="M3 8.2 H13" stroke="#2f9a2f" stroke-width=".9" stroke-dasharray="1.4 1"/></svg><span style="left:103px">Шлюз джерел даних</span></div>
    <div class="row abs" style="top:234px;height:16px;line-height:16px"><svg class="abs" style="left:82px;top:0" width="16" height="16" viewBox="0 0 16 16"><path d="M3.4 5.6 H12.6" stroke="#9a9a9a" stroke-width=".9" stroke-dasharray="1.2 .7"/><path d="M3.2 8.2 H12.8 M3.2 10 H12.8" stroke="#6f6f6f" stroke-width="1.1" stroke-dasharray="1.6 .6"/></svg><span style="left:103px">DCON клієнт</span></div>
    <div class="row abs" style="top:250px;height:16px;line-height:16px"><svg class="abs" style="left:65px;top:5px" width="10" height="6" viewBox="0 0 10 6"><path d="M0.8 0.9 H9.2 L5 5.2 Z" fill="#505050"/></svg><svg class="abs" style="left:82px;top:0" width="16" height="16" viewBox="0 0 16 16"><path d="M2 8 H15" stroke="#59a8e8" stroke-width="1.1"/><circle cx="4" cy="8" r="2.1" fill="#f4a81c"/><path d="M6.6 8 H13" stroke="#3d86d6" stroke-width="1.8" stroke-dasharray="1.5 .8"/></svg><span style="left:103px">Клієнт ModBus</span></div>
    <div class="row abs" style="top:266px;height:14px;line-height:14px"><svg class="abs" style="left:85px;top:4px" width="10" height="6" viewBox="0 0 10 6"><path d="M0.8 0.9 H9.2 L5 5.2 Z" fill="#505050"/></svg><span style="left:103px">KM 101</span></div>
    <div class="row abs" style="top:280px;height:14px;line-height:14px"><span style="left:123px">AT 101_1</span></div>
    <div class="row abs" style="top:294px;height:14px;line-height:14px"><span style="left:123px">AT 101_2</span></div>
    <div class="row abs sel" style="top:308px;height:14px;line-height:14px"><span style="left:123px">KK102</span></div>
    <div class="row abs" style="top:322px;height:14px;line-height:14px"><span style="left:123px">TE1314_1</span></div>
    <div class="row abs" style="top:336px;height:16px;line-height:16px"><svg class="abs" style="left:82px;top:0" width="16" height="16" viewBox="0 0 16 16"><path d="M1.4 6.4 L9 7.6 L9 9 L1.4 8 Z" fill="#5f5f5f"/><path d="M5.6 6.4 H14.6 V10 H5.6 Z" fill="#1a1a1a" opacity=".9"/><path d="M7 8.2 H13.6" stroke="#e8e8e8" stroke-width="1.2" stroke-dasharray="1.6 .7"/></svg><span style="left:103px">Клієнт OPC-UA</span></div>
    <div class="row abs" style="top:352px;height:16px;line-height:16px"><svg class="abs" style="left:82px;top:0" width="16" height="16" viewBox="0 0 16 16"></svg><span style="left:103px">SNMP клієнт</span></div>
  </div>
  <div id="thead" class="abs">Назва</div>
  <div id="vsb" class="abs">
   <div class="abs vb" style="top:0;height:14px;border-bottom:1px solid #b5b5b5"><svg class="abs" style="left:2px;top:3px" width="10" height="6" viewBox="0 0 10 6"><path d="M0.8 5.1 H9.2 L5 0.8 Z" fill="#4d4d4d"/></svg></div>
   <div class="abs vb" style="top:14px;height:226px;border-bottom:1px solid #b5b5b5"></div>
   <div class="abs vb" style="top:342px;height:14px;border-top:1px solid #b5b5b5"><svg class="abs" style="left:2px;top:3px" width="10" height="6" viewBox="0 0 10 6"><path d="M0.8 0.9 H9.2 L5 5.2 Z" fill="#4d4d4d"/></svg></div>
  </div>
  <div id="hsb" class="abs">
   <div class="abs hb" style="left:0;width:14px;border-right:1px solid #b5b5b5"><svg class="abs" style="left:3px;top:2px" width="6" height="10" viewBox="0 0 6 10"><path d="M5.1 0.8 V9.2 L0.8 5 Z" fill="#4d4d4d"/></svg></div>
   <div class="abs hb" style="left:14px;width:92px;border-right:1px solid #b5b5b5"></div>
   <div class="abs hb" style="left:223px;width:13px;border-left:1px solid #b5b5b5"><svg class="abs" style="left:2px;top:2px" width="6" height="10" viewBox="0 0 6 10"><path d="M0.9 0.8 V9.2 L5.2 5 Z" fill="#4d4d4d"/></svg></div>
  </div>
  <div id="corner" class="abs"></div>
 </div>
 <div id="ledit" class="abs"></div>
 <!-- right panel -->
 <div id="rframe" class="abs"></div><div id="rframe2" class="abs"></div>
 <div id="ptitle" class="abs">Параметр: СВ102</div>
 <div id="pane" class="abs"></div><div id="pane2" class="abs"></div><div id="inner" class="abs"></div>
 <div class="abs tab" style="left:274px;width:88px">Параметр</div>
 <div class="abs tab on" style="left:361px;width:85px">Атрибути</div>
 <div class="abs tab" style="left:445px;width:85px">Архівація</div>
 <div class="abs tab" style="left:529px;width:168px">Конфігурація шаблону</div>
 <!-- form -->
 <div class="abs lbl" style="left:286px;top:160px">Ідентифікатор:</div><div class="abs lbl b" style="left:388px;top:160px">СВ102</div>
 <div class="abs lbl" style="left:286px;top:181px">Ім'я:</div>
 <div class="abs inp" style="left:320px;top:177px;width:371px;height:22px"><div class="abs lbl" style="left:3px;top:3px">KK102</div></div>
 <div class="abs lbl" style="left:286px;top:202px">Опис:</div>
 <div class="abs inp" style="left:286px;top:219px;width:405px;height:84px;border-radius:2px"></div>
 <div class="abs lbl" style="left:286px;top:306px">Помилка:</div><div class="abs lbl b" style="left:352px;top:306px">0</div>
 <div class="abs lbl" style="left:286px;top:323px">Команда "Відкрити":</div><div class="abs cb" style="left:424px;top:323px"></div>
 <div class="abs lbl" style="left:286px;top:341px">Команда "Закрити":</div><div class="abs cb" style="left:420px;top:341px"><i></i></div>
 <div class="abs lbl" style="left:286px;top:359px">Команда "Стоп":</div><div class="abs cb" style="left:398px;top:359px"><i></i></div>
 <div class="abs lbl" style="left:286px;top:377px">Стан "Відкрито":</div><div class="abs lbl b" style="left:399px;top:377px">Ні</div>
 <div class="abs lbl" style="left:286px;top:394px">Стан "Закрито":</div><div class="abs lbl b" style="left:394px;top:394px">Так</div>
 <!-- status -->
 <div class="abs lbl" style="left:668px;top:495px;color:#aa1414">root</div>
 <svg class="abs" style="left:637px;top:498px" width="15" height="10" viewBox="0 0 15 10"><path d="M8.4 8.6 L13.6 2.4" stroke="#8a8a8a" stroke-width="1.3"/><path d="M1.6 1.4 H13 L7.4 8.2 Z" fill="#0a0a0a"/></svg>
 <svg class="abs" style="left:261px;top:280px" width="2" height="17" viewBox="0 0 2 17"><rect x="0" y="0" width="1" height="1" fill="#bdbdbd"/><rect x="1" y="1" width="1" height="1" fill="#fbfbfb"/><rect x="0" y="3" width="1" height="1" fill="#bdbdbd"/><rect x="1" y="4" width="1" height="1" fill="#fbfbfb"/><rect x="0" y="6" width="1" height="1" fill="#bdbdbd"/><rect x="1" y="7" width="1" height="1" fill="#fbfbfb"/><rect x="0" y="9" width="1" height="1" fill="#bdbdbd"/><rect x="1" y="10" width="1" height="1" fill="#fbfbfb"/><rect x="0" y="12" width="1" height="1" fill="#bdbdbd"/><rect x="1" y="13" width="1" height="1" fill="#fbfbfb"/><rect x="0" y="15" width="1" height="1" fill="#bdbdbd"/><rect x="1" y="16" width="1" height="1" fill="#fbfbfb"/></svg>
 <svg class="abs" style="left:705px;top:500px" width="11" height="11" viewBox="0 0 11 11"><rect x="9" y="0" width="1" height="1" fill="#b8b8b8"/><rect x="10" y="1" width="1" height="1" fill="#fdfdfd"/><rect x="6" y="3" width="1" height="1" fill="#b8b8b8"/><rect x="7" y="4" width="1" height="1" fill="#fdfdfd"/><rect x="9" y="3" width="1" height="1" fill="#b8b8b8"/><rect x="10" y="4" width="1" height="1" fill="#fdfdfd"/><rect x="3" y="6" width="1" height="1" fill="#b8b8b8"/><rect x="4" y="7" width="1" height="1" fill="#fdfdfd"/><rect x="6" y="6" width="1" height="1" fill="#b8b8b8"/><rect x="7" y="7" width="1" height="1" fill="#fdfdfd"/><rect x="9" y="6" width="1" height="1" fill="#b8b8b8"/><rect x="10" y="7" width="1" height="1" fill="#fdfdfd"/><rect x="0" y="9" width="1" height="1" fill="#b8b8b8"/><rect x="1" y="10" width="1" height="1" fill="#fdfdfd"/><rect x="3" y="9" width="1" height="1" fill="#b8b8b8"/><rect x="4" y="10" width="1" height="1" fill="#fdfdfd"/><rect x="6" y="9" width="1" height="1" fill="#b8b8b8"/><rect x="7" y="10" width="1" height="1" fill="#fdfdfd"/><rect x="9" y="9" width="1" height="1" fill="#b8b8b8"/><rect x="10" y="10" width="1" height="1" fill="#fdfdfd"/></svg>
</div>
</body>
</html>
